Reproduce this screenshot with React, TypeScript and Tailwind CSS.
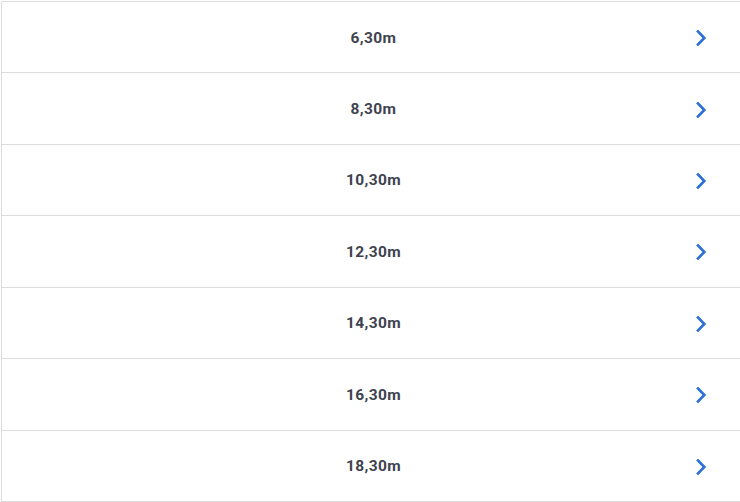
const heights = ['6,30m', '8,30m', '10,30m', '12,30m', '14,30m', '16,30m', '18,30m'];

function Chevron() {
  return (
    <svg width="12" height="16" viewBox="0 0 12 16" fill="none" className="text-[#2b6fd6]">
      <path d="M3 1.5 L9.3 8 L3 14.5" stroke="currentColor" strokeWidth="2.6" strokeLinecap="square" strokeLinejoin="miter" />
    </svg>
  );
}

export default function App() {
  return (
    <div className="w-[740px] h-[502px] bg-white pl-px pt-px" style={{ fontFamily: 'Roboto, "Liberation Sans", sans-serif' }}>
      <div className="border-l border-t border-[#dcdcdc]">
        {heights.map((h) => (
          <div key={h} className="relative h-[71.43px] border-b border-[#dcdcdc] flex items-center justify-center">
            <span className="pt-[2px] ml-[5px] text-[15.5px] font-bold text-[#3e4350] tracking-[0.4px]">{h}</span>
            <div className="absolute right-[33px] top-1/2 -translate-y-[7px] flex">
              <Chevron />
            </div>
          </div>
        ))}
      </div>
    </div>
  );
}
